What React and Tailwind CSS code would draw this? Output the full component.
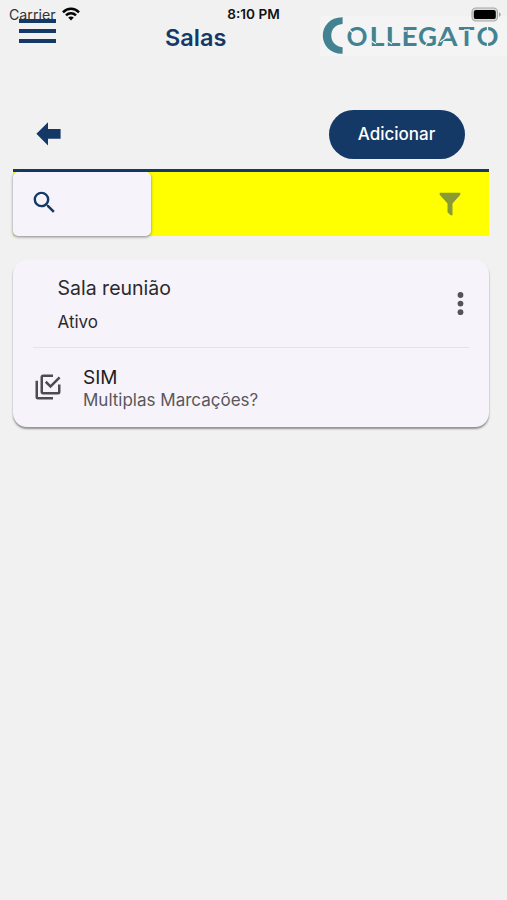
import { memo } from 'react';

// Status bar icons
const WifiIcon = () => (
  <svg className="w-[18px] h-[14px]" viewBox="0 0 18 14" fill="none" stroke="#050505" strokeWidth="2.5">
    <path d="M1 5.3C5.4 .7 12.6 .7 17 5.3" />
    <path d="M4 8.4C6.8 5.6 11.2 5.6 14 8.4" />
    <path d="M9 13.4L6.2 10.6C7.8 9.1 10.2 9.1 11.8 10.6Z" fill="#050505" stroke="none" />
  </svg>
);

const BatteryIcon = () => (
  <svg className="w-[31px] h-[15px]" viewBox="0 0 31 15">
    <rect x="1" y="1" width="25.5" height="13" rx="4" fill="#dadada" stroke="#a5a5a5" strokeWidth="1.1" />
    <rect x="2.8" y="2.9" width="22" height="9.2" rx="2.2" fill="#000" />
    <path d="M28 5.2C30.2 6 30.2 9 28 9.8Z" fill="#a5a5a5" />
  </svg>
);

const StatusBar = memo(() => (
  <div className="absolute inset-x-0 top-0 z-10 flex h-7 items-center pt-px">
    <div className="flex w-[168px] items-center pl-[9px]">
      <span className="w-[53px] text-[14.2px] text-[#333]">Carrier</span>
      <WifiIcon />
    </div>
    <div className="flex-1 text-center text-[13.6px] font-semibold text-[#111]">8:10 PM</div>
    <div className="flex w-[168px] justify-end pr-[5px]">
      <BatteryIcon />
    </div>
  </div>
));

StatusBar.displayName = 'StatusBar';

const LOGO_LETTERS = [
  { char: 'O', x: 346.5, width: 21 },
  { char: 'L', x: 369.5, width: 15 },
  { char: 'L', x: 385.5, width: 15 },
  { char: 'E', x: 401.5, width: 16 },
  { char: 'G', x: 418, width: 19 },
  { char: 'A', x: 437.5, width: 20 },
  { char: 'T', x: 458.5, width: 16 },
  { char: 'O', x: 476.5, width: 22 },
];

// Brand logo, stencil cuts are drawn over the letters
const Logo = () => (
  <svg className="w-[187px] h-[40px] bg-[#f4f4f4]" viewBox="320 16 187 40">
    <path d="M342.6 17.2V24C334.5 24.6 331.3 30 331.3 35.5S334.5 46.4 342.6 47.2V53.8C330 54 322.8 45 322.8 35.5S330 17 342.6 17.2Z" fill="#438391" />
    <g fill="#438391" fontFamily="Lato" fontWeight="700" fontSize="27">
      {LOGO_LETTERS.map(({ char, x, width }) => (
        <text key={x} x={x} y="45.7" textLength={width} lengthAdjust="spacingAndGlyphs">{char}</text>
      ))}
    </g>
    <g stroke="#f4f4f4" strokeWidth="1.3">
      <path d="M347 28L354 34M370 40L376 44M386 40L392 44M402 31H407M425 46L429 40M440 42L447 37M464 30H470M487.5 25V31M487.5 41V47" />
    </g>
  </svg>
);

const Header = () => (
  <header className="flex h-[110px] items-start">
    <button className="mt-[19px] ml-[19px] flex w-[37px] flex-col gap-[6.5px]" aria-label="Menu">
      <span className="h-[3.7px] w-full bg-[#143966]" />
      <span className="h-[3.7px] w-full bg-[#143966]" />
      <span className="h-[3.7px] w-full bg-[#143966]" />
    </button>
    <h1 className="mt-[22px] ml-[109px] w-[155px] text-[23.5px] leading-8 font-semibold text-[#143966]">Salas</h1>
    <div className="mt-4">
      <Logo />
    </div>
  </header>
);

const Toolbar = () => (
  <div className="flex h-[59px] items-start justify-between pr-6 pl-[23px]">
    <button className="mt-3" aria-label="Voltar">
      <svg className="w-[25px] h-6" viewBox="0 0 25 24" fill="#143966">
        <path d="M.4 11.8L12 .2V7H24.6V16.8H12V23.4Z" />
      </svg>
    </button>
    <button className="h-[48.5px] w-[136px] rounded-full bg-[#143966] text-[17px] font-medium text-white">
      Adicionar
    </button>
  </div>
);

const FilterBar = () => (
  <div className="flex h-[67px] justify-between border-t-[3px] border-[#143966] bg-[#ff0]">
    <div className="h-[64px] w-[137.5px] rounded-[5px] bg-[#f6f4fa] pt-4 pl-[17px] shadow-[0_1px_3px_rgba(0,0,0,0.45)]">
      <svg className="w-[29px] h-[29px]" viewBox="0 0 24 24" fill="#143966">
        <path d="M9.5,3A6.5,6.5 0 0,1 16,9.5C16,11.11 15.41,12.59 14.44,13.73L14.71,14H15.5L20.5,19L19,20.5L14,15.5V14.71L13.73,14.44C12.59,15.41 11.11,16 9.5,16A6.5,6.5 0 0,1 3,9.5A6.5,6.5 0 0,1 9.5,3M9.5,5C7,5 5,7 5,9.5C5,12 7,14 9.5,14C12,14 14,12 14,9.5C14,7 12,5 9.5,5Z" />
      </svg>
    </div>
    <svg className="mt-5 mr-7 w-[22px] h-6" viewBox="0 0 22 24" fill="#899b32">
      <path d="M.7 .8H21.3V2.7L13.5 11.6V23.3H11.6L8.5 20.2V11.6L.7 2.7Z" />
    </svg>
  </div>
);

const RoomCard = memo(({ room }) => (
  <article className="mt-6 h-[167px] rounded-[14px] bg-[#f6f4fa] shadow-[0_2px_2px_rgba(0,0,0,0.4)]">
    <div className="flex h-[87px] justify-between pr-[25px] pl-[44.5px]">
      <div className="pt-[15px] text-[#2b2a2e]">
        <h2 className="text-[19.5px] leading-[27px]">{room.name}</h2>
        <p className="mt-[8px] text-[17px] leading-6">{room.status}</p>
      </div>
      <svg className="mt-8 w-[7px] h-[23px]" viewBox="0 0 7 23" fill="#555359">
        <circle cx="3.5" cy="3" r="2.9" />
        <circle cx="3.5" cy="11.6" r="2.9" />
        <circle cx="3.5" cy="20.2" r="2.9" />
      </svg>
    </div>
    <div className="mx-5 flex border-t border-[#e5e3e9] pt-[18px]">
      <svg className="mt-[6px] w-[30px] h-[30px]" viewBox="0 0 24 24" fill="#4d4b51">
        <path d="M20,16V10H22V16A2,2 0 0,1 20,18H8C6.89,18 6,17.1 6,16V4C6,2.89 6.89,2 8,2H16V4H8V16H20M10.91,7.08L14,10.17L20.59,3.58L22,5L14,13L9.5,8.5L10.91,7.08M16,20V22H4A2,2 0 0,1 2,20V7H4V20H16Z" />
      </svg>
      <div className="ml-5">
        <p className="text-[19px] leading-6 text-[#1f1e22]">{room.multiple}</p>
        <p className="text-[17px] leading-5 text-[#59575d]">Multiplas Marcações?</p>
      </div>
    </div>
  </article>
));

RoomCard.displayName = 'RoomCard';

const ROOMS = [{ id: 1, name: 'Sala reunião', status: 'Ativo', multiple: 'SIM' }];

export default function App() {
  return (
    <div className="relative h-[900px] w-[507px] overflow-hidden bg-[#f1f1f1] font-['Inter',sans-serif]">
      <StatusBar />
      <Header />
      <main className="mr-[18.5px] ml-[13px]">
        <Toolbar />
        <FilterBar />
        {ROOMS.map((room) => (
          <RoomCard key={room.id} room={room} />
        ))}
      </main>
    </div>
  );
}
